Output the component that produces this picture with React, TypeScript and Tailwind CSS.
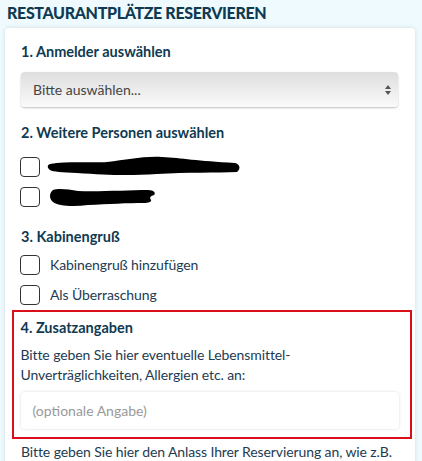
import React from "react";

const font = { fontFamily: 'Lato, "Noto Sans", sans-serif' };

function Box() {
  return <div className="w-[20px] h-[20px] shrink-0 rounded-[4px] border-[1.5px] border-[#333] bg-white" />;
}

export default function App() {
  return (
    <div className="w-[422px] h-[461px] overflow-hidden bg-[#eefafd]" style={font}>
      <h1 className="pl-[7px] pt-[2px] h-[28px] text-[16px] leading-[22px] font-black tracking-[-0.35px] text-[#0f3a52]">
        RESTAURANTPLÄTZE RESERVIEREN
      </h1>
      <div className="mx-[5px] mr-[7px] h-[440px] rounded-[4px] bg-white shadow-[0_0_4px_rgba(0,0,0,0.12)] pt-[12px]">
        <div className="px-[16px]">
          <h2 className="text-[14.5px] leading-[24px] font-bold text-[#0f3a52]">1. Anmelder auswählen</h2>
          <div className="mt-[8px] h-[35px] w-[377px] rounded-[4px] bg-gradient-to-b from-[#dedede] to-[#fafafa] shadow-[0_1px_2px_rgba(0,0,0,0.25)] flex items-center justify-between pl-[12px] pr-[6px]">
            <span className="text-[14px] text-[#444]">Bitte auswählen...</span>
            <svg width="8" height="12" viewBox="0 0 8 12">
              <path d="M4 1 L7 5 H1 Z" fill="#555" />
              <path d="M4 11 L7 7 H1 Z" fill="#555" />
            </svg>
          </div>
          <h2 className="mt-[14px] text-[14.5px] leading-[24px] font-bold text-[#0f3a52]">2. Weitere Personen auswählen</h2>
          <div className="mt-[12px] flex flex-col gap-[10px]">
            <div className="h-[20px] flex items-center gap-[7px] -ml-[1px]">
              <Box />
              <svg width="194" height="20" viewBox="0 2 194 20" className="overflow-visible">
                <path d="M3 9 C20 6, 45 8, 60 7 C80 5, 95 1, 115 2 C135 3, 150 6, 188 8 C193 9, 194 14, 190 17 C170 18, 140 17, 110 19 C80 21, 60 20, 30 18 C15 17, 6 17, 3 15 C0 13, 0 10, 3 9 Z" fill="#000" />
              </svg>
            </div>
            <div className="h-[20px] flex items-center gap-[8px] -ml-[1px]">
              <Box />
              <svg width="110" height="20" viewBox="0 2 110 20" className="overflow-visible">
                <path d="M5 5 C10 3, 20 4, 30 6 C50 7, 80 5, 100 5 C106 5, 108 8, 106 10 C103 11, 101 12, 103 15 C104 17, 100 18, 96 18 C80 18, 60 19, 40 20 C25 22, 10 21, 5 17 C1 14, 1 8, 5 5 Z" fill="#000" />
              </svg>
            </div>
          </div>
          <h2 className="mt-[18px] text-[14.5px] leading-[24px] font-bold text-[#0f3a52]">3. Kabinengruß</h2>
          <div className="mt-[6px] flex flex-col gap-[10px]">
            <div className="flex items-center gap-[10px] -ml-[1px]">
              <Box />
              <span className="text-[14px] leading-[20px] tracking-[-0.1px] text-[#1d3b52]">Kabinengruß hinzufügen</span>
            </div>
            <div className="flex items-center gap-[10px] -ml-[1px]">
              <Box />
              <span className="text-[14px] leading-[20px] tracking-[-0.1px] text-[#1d3b52]">Als Überraschung</span>
            </div>
          </div>
        </div>
        <div className="mt-[5px] ml-[7px] w-[400px] h-[129px] border-[2.5px] border-[#d9101c] pl-[6.5px] pt-[4px]">
          <h2 className="text-[14.5px] leading-[24px] font-bold text-[#0f3a52]">4. Zusatzangaben</h2>
          <p className="mt-[5px] text-[14px] leading-[20px] tracking-[-0.1px] text-[#1d3b52]">
            Bitte geben Sie hier eventuelle Lebensmittel-
            <br />
            Unverträglichkeiten, Allergien etc. an:
          </p>
          <div className="mt-[7px] h-[37px] w-[378px] rounded-[4px] bg-white shadow-[0_0_3px_rgba(0,0,0,0.15)] flex items-center pl-[12px]">
            <span className="text-[14px] text-[#999]">(optionale Angabe)</span>
          </div>
        </div>
        <p className="mt-[3px] pl-[16px] text-[14px] leading-[20px] tracking-[-0.1px] text-[#1d3b52] whitespace-nowrap">
          Bitte geben Sie hier den Anlass Ihrer Reservierung an, wie z.B.
        </p>
      </div>
    </div>
  );
}
